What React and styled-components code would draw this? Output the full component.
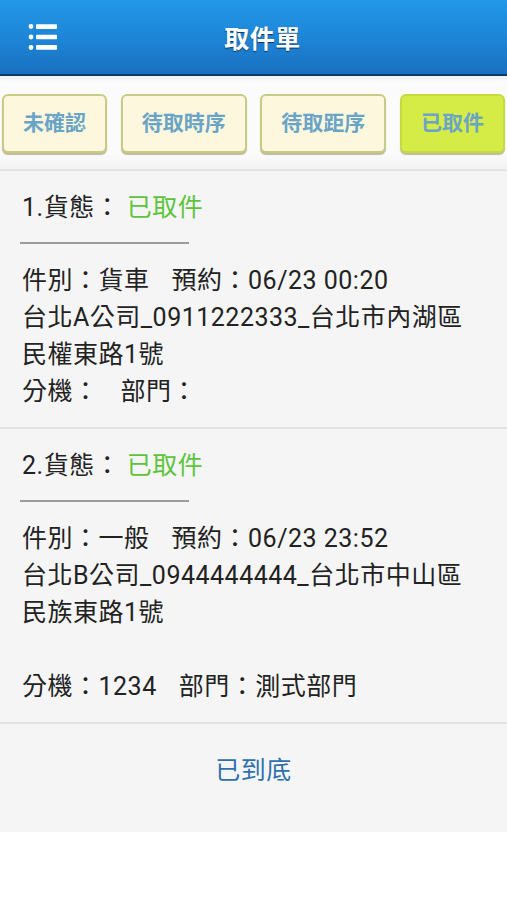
import React from "react";
import styled, { createGlobalStyle } from "styled-components";

const GlobalStyle = createGlobalStyle`
    body {
        margin: 0;
        background: #ffffff;
        font-family: Roboto, "Noto Sans CJK TC", sans-serif;
    }
`;

const tabs = [
    { label: "未確認", active: false },
    { label: "待取時序", active: false },
    { label: "待取距序", active: false },
    { label: "已取件", active: true },
];

const orders = [
    {
        no: 1,
        status: "已取件",
        kind: "貨車",
        time: "06/23 00:20",
        address: ["台北A公司_0911222333_台北市內湖區", "民權東路1號"],
        ext: "",
        dept: "",
    },
    {
        no: 2,
        status: "已取件",
        kind: "一般",
        time: "06/23 23:52",
        address: ["台北B公司_0944444444_台北市中山區", "民族東路1號", ""],
        ext: "1234",
        dept: "測式部門",
    },
];

function MenuIcon() {
    return (
        <svg width="30" height="28" viewBox="0 0 30 28">
            <g fill="#ffffff">
                <circle cx="3" cy="3.5" r="2.4" />
                <circle cx="3" cy="14" r="2.4" />
                <circle cx="3" cy="24.5" r="2.4" />
                <rect x="8" y="1.3" width="21" height="4.6" rx="0.8" />
                <rect x="8" y="11.7" width="21" height="4.6" rx="0.8" />
                <rect x="8" y="22.1" width="21" height="4.6" rx="0.8" />
            </g>
        </svg>
    );
}

export default function App() {
    return (
        <Page>
            <GlobalStyle />
            <Header>
                <MenuButton>
                    <MenuIcon />
                </MenuButton>
                <Title>取件單</Title>
                <span />
            </Header>
            <Toolbar>
                {tabs.map((t) => (
                    <TabButton key={t.label} $active={t.active}>
                        {t.label}
                    </TabButton>
                ))}
            </Toolbar>
            <List>
                {orders.map((o) => (
                    <Card key={o.no}>
                        <StatusRow>
                            {o.no}.貨態： <Status>{o.status}</Status>
                        </StatusRow>
                        <ShortRule />
                        <Row>
                            <Pair>件別：{o.kind}</Pair>
                            <span>預約：{o.time}</span>
                        </Row>
                        {o.address.map((line, i) => (
                            <Row key={i}>{line}</Row>
                        ))}
                        <Row>
                            <Pair>分機：{o.ext}</Pair>
                            <span>部門：{o.dept}</span>
                        </Row>
                    </Card>
                ))}
                <Footer>已到底</Footer>
            </List>
        </Page>
    );
}

const Page = styled.div`
    width: 507px;
    min-height: 900px;
    background: #ffffff;
`;

const Header = styled.header`
    display: grid;
    grid-template-columns: 70px 1fr 52px;
    align-items: center;
    height: 74px;
    background: linear-gradient(to bottom, #2298e8 0%, #1d84d6 55%, #1a6fbe 100%);
    border-bottom: 2px solid #0f3a63;
`;

const MenuButton = styled.div`
    display: flex;
    align-items: center;
    padding-left: 28px;
    height: 100%;
`;

const Title = styled.h1`
    margin: 0;
    text-align: center;
    color: #ffffff;
    font-size: 25px;
    font-weight: 700;
    letter-spacing: 0.5px;
    text-shadow: 0 1px 1px rgba(0, 0, 0, 0.6);
`;

const Toolbar = styled.nav`
    display: flex;
    justify-content: space-between;
    padding: 18px 2px 16px;
    background: linear-gradient(to bottom, #f0f0f0 0px, #fbfbfb 6px, #fbfbfb 84%, #f2f2f2 100%);
    border-bottom: 2px solid #e4e4e4;
`;

const TabButton = styled.button`
    height: 59px;
    padding: 0 19px;
    border: 2px solid ${(p) => (p.$active ? "#c6dc3a" : "#c9cb82")};
    border-radius: 6px;
    background: ${(p) => (p.$active ? "#d6ec46" : "#fcf7dd")};
    box-shadow: 0 2px 1px rgba(110, 110, 40, 0.45);
    color: #6aa4c6;
    font-family: Roboto, "Noto Sans CJK TC", sans-serif;
    font-size: 21px;
    font-weight: 700;
    line-height: 1;
`;

const List = styled.main`
    background: #f5f5f5;
`;

const Card = styled.section`
    display: flex;
    flex-direction: column;
    padding: 19px 20px 20px;
    border-bottom: 2px solid #e2e2e2;
    color: #222222;
    font-size: 25px;
    letter-spacing: 0.5px;
`;

const StatusRow = styled.div`
    line-height: 36px;
    padding-left: 2px;
`;

const Status = styled.span`
    color: #5ec43c;
`;

const ShortRule = styled.hr`
    width: 169px;
    height: 2px;
    margin: 16px 0 15px;
    border: 0;
    background: #9c9c9c;
`;

const Row = styled.div`
    display: flex;
    height: 37px;
    align-items: center;
    padding-left: 2px;
    white-space: pre;
`;

const Pair = styled.span`
    margin-right: 22px;
`;

const Footer = styled.div`
    padding: 29px 0 43px;
    line-height: 36px;
    text-align: center;
    color: #2e6fae;
    font-size: 25px;
    letter-spacing: 0.5px;
`;
